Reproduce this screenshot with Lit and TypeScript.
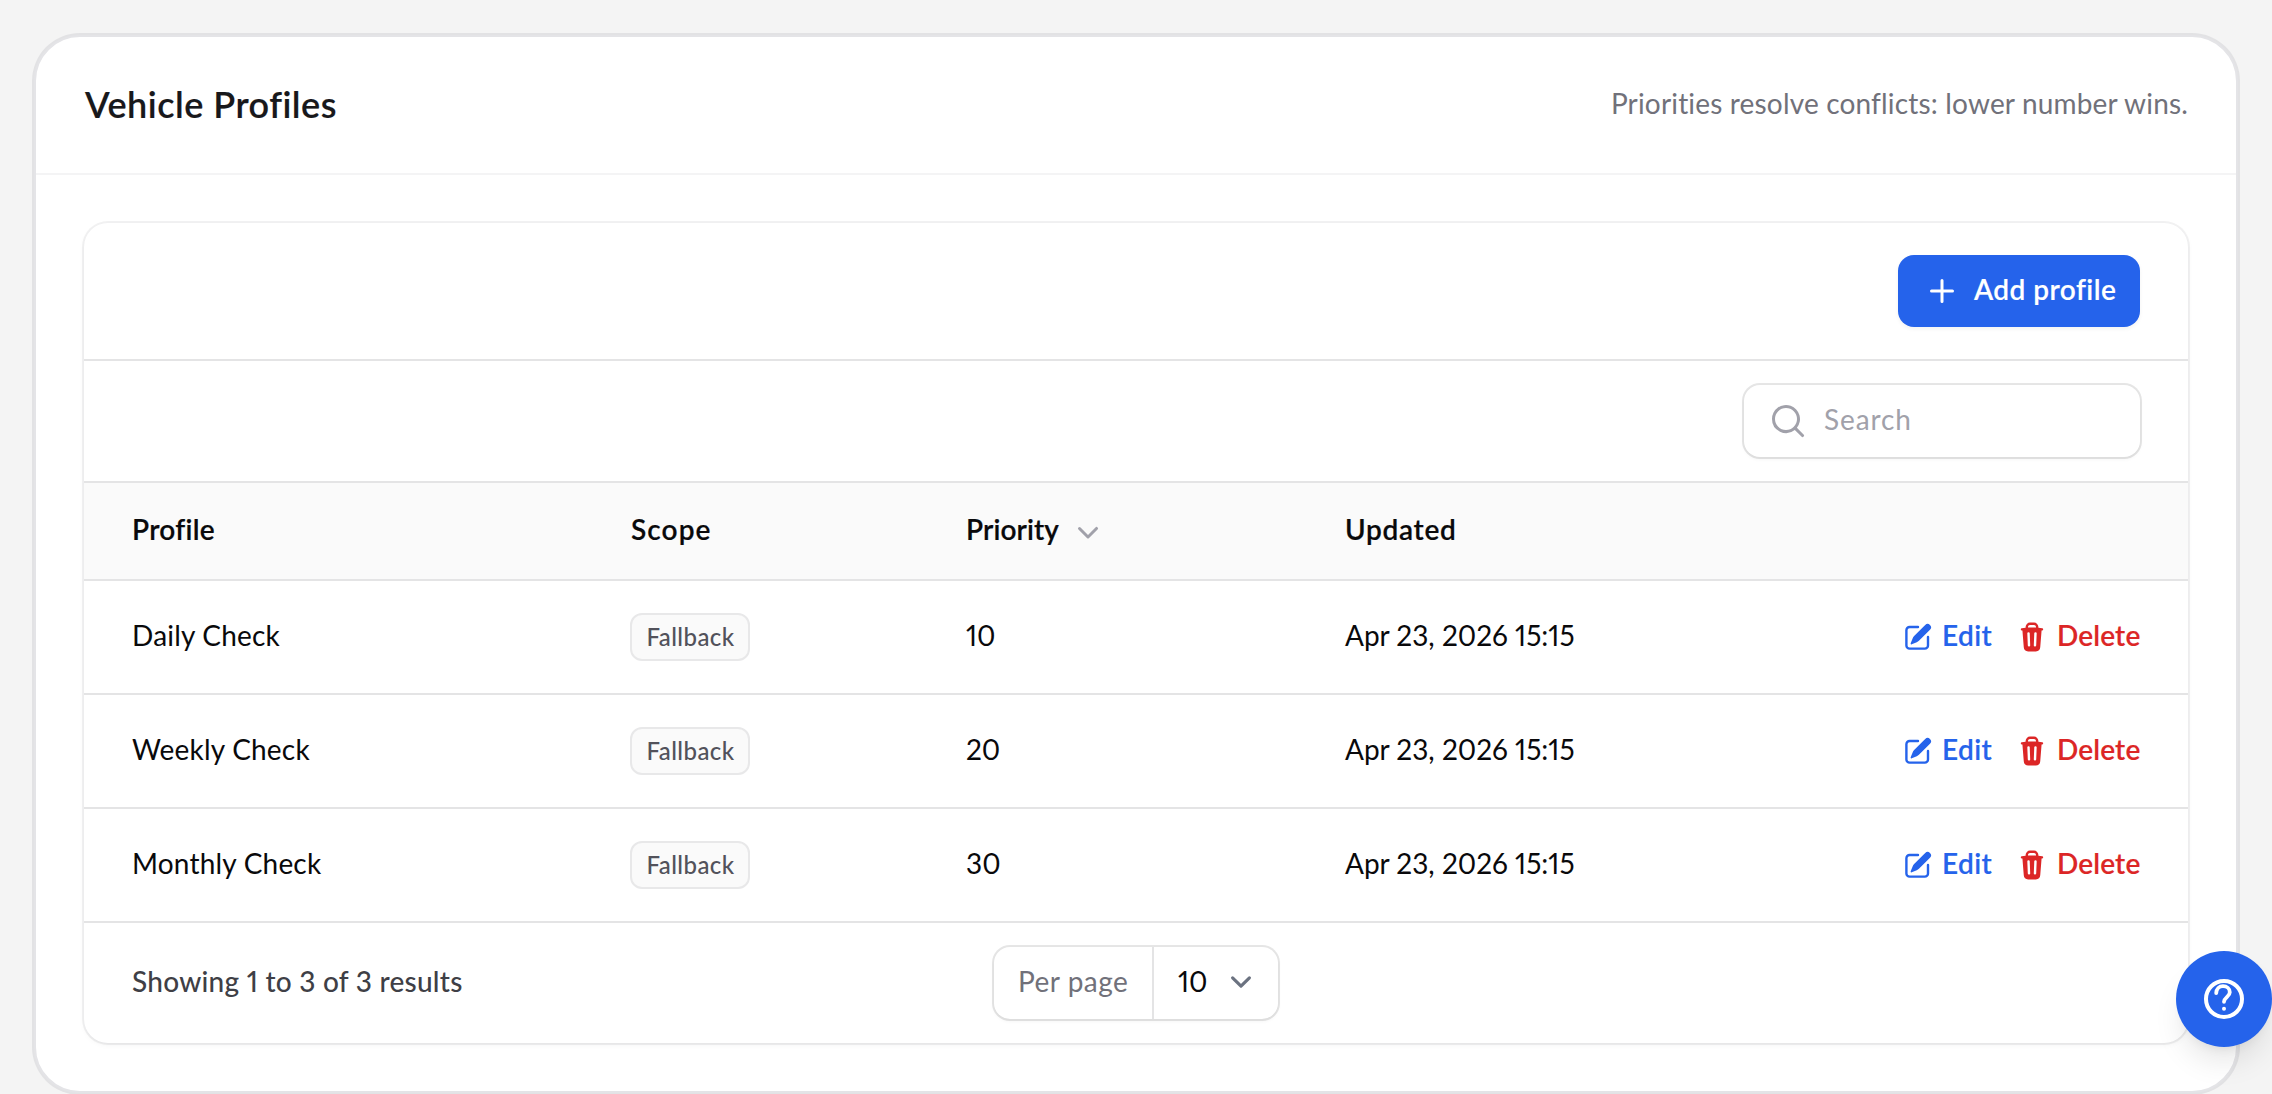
import { LitElement, html, css, svg } from "lit";

interface Profile {
  name: string;
  scope: string;
  priority: number;
  updated: string;
}

const PROFILES: Profile[] = [
  { name: "Daily Check", scope: "Fallback", priority: 10, updated: "Apr 23, 2026 15:15" },
  { name: "Weekly Check", scope: "Fallback", priority: 20, updated: "Apr 23, 2026 15:15" },
  { name: "Monthly Check", scope: "Fallback", priority: 30, updated: "Apr 23, 2026 15:15" },
];

const icons = {
  plus: svg`<path d="M10.75 4.75a.75.75 0 0 0-1.5 0v4.5h-4.5a.75.75 0 0 0 0 1.5h4.5v4.5a.75.75 0 0 0 1.5 0v-4.5h4.5a.75.75 0 0 0 0-1.5h-4.5v-4.5Z"/>`,
  search: svg`<path fill-rule="evenodd" d="M9 3.5a5.5 5.5 0 1 0 0 11 5.5 5.5 0 0 0 0-11ZM2 9a7 7 0 1 1 12.452 4.391l3.328 3.329a.75.75 0 1 1-1.06 1.06l-3.329-3.328A7 7 0 0 1 2 9Z" clip-rule="evenodd"/>`,
  chevron: svg`<path fill-rule="evenodd" d="M5.22 8.22a.75.75 0 0 1 1.06 0L10 11.94l3.72-3.72a.75.75 0 1 1 1.06 1.06l-4.25 4.25a.75.75 0 0 1-1.06 0L5.22 9.28a.75.75 0 0 1 0-1.06Z" clip-rule="evenodd"/>`,
  edit: svg`<path d="m5.433 13.917 1.262-3.155A4 4 0 0 1 7.58 9.42l6.92-6.918a2.121 2.121 0 0 1 3 3l-6.92 6.918c-.383.383-.84.685-1.343.886l-3.154 1.262a.5.5 0 0 1-.65-.65Z"/><path d="M3.5 5.75c0-.69.56-1.25 1.25-1.25H10A.75.75 0 0 0 10 3H4.75A2.75 2.75 0 0 0 2 5.75v9.5A2.75 2.75 0 0 0 4.75 18h9.5A2.75 2.75 0 0 0 17 15.25V10a.75.75 0 0 0-1.5 0v5.25c0 .69-.56 1.25-1.25 1.25h-9.5c-.69 0-1.25-.56-1.25-1.25v-9.5Z"/>`,
  trash: svg`<path fill-rule="evenodd" d="M8.75 1A2.75 2.75 0 0 0 6 3.75v.443c-.795.077-1.584.176-2.365.298a.75.75 0 1 0 .23 1.482l.149-.022.841 10.518A2.75 2.75 0 0 0 7.596 19h4.807a2.75 2.75 0 0 0 2.742-2.53l.841-10.52.149.023a.75.75 0 0 0 .23-1.482A41.03 41.03 0 0 0 14 4.193V3.75A2.75 2.75 0 0 0 11.25 1h-2.5ZM10 4c.84 0 1.673.025 2.5.075V3.75c0-.69-.56-1.25-1.25-1.25h-2.5c-.69 0-1.25.56-1.25 1.25v.325C8.327 4.025 9.16 4 10 4ZM8.58 7.72a.75.75 0 0 0-1.5.06l.3 7.5a.75.75 0 1 0 1.5-.06l-.3-7.5Zm4.34.06a.75.75 0 1 0-1.5-.06l-.3 7.5a.75.75 0 1 0 1.5.06l.3-7.5Z" clip-rule="evenodd"/>`,
};

const icon = (body: unknown, cls: string) =>
  html`<svg class="icon ${cls}" viewBox="0 0 20 20" fill="currentColor" aria-hidden="true">${body}</svg>`;

class AppRoot extends LitElement {
  static styles = css`
    :host {
      display: block;
      position: relative;
      box-sizing: border-box;
      height: 1094px;
      padding: 35px 34px 0;
      overflow: hidden;
      background: #f4f4f4;
      color: #09090b;
      font: 400 28px/40px Lato, "Open Sans", sans-serif;
      font-variant-numeric: proportional-nums;
      white-space: nowrap;
    }
    * { box-sizing: border-box; }
    svg { display: block; flex: none; }
    .icon { width: 40px; height: 40px; }
    .icon.small { width: 32px; height: 32px; }
    .t { display: block; padding-bottom: 4px; }
    .card {
      height: 1058px;
      border: 2px solid #e4e4e7;
      border-radius: 46px;
      box-shadow: 0 0 0 2px #e2e2e4;
      background: #fff;
    }
    .card-head {
      display: flex;
      justify-content: space-between;
      align-items: center;
      height: 138px;
      padding: 0 48px;
      border-bottom: 2px solid #f4f4f5;
    }
    h1 {
      margin: 0;
      padding: 0 0 2px 1px;
      font-size: 36px;
      font-weight: 600;
      color: #18181b;
      letter-spacing: 0.5px;
      -webkit-text-stroke: 0.15px;
    }
    .hint { color: #71717a; letter-spacing: 0.17px; }
    .panel {
      height: 820px;
      margin: 48px 48px 0;
      border-radius: 24px;
      box-shadow: 0 0 0 2px rgba(9, 9, 11, 0.05), 0 2px 6px rgba(0, 0, 0, 0.04), 0 2px 4px -2px rgba(0, 0, 0, 0.05);
      background: #fff;
    }
    .toolbar, .filters {
      display: flex;
      justify-content: flex-end;
      align-items: center;
      padding: 0 48px;
      border-bottom: 2px solid #e4e4e5;
    }
    .toolbar { height: 138px; }
    .filters { height: 122px; }
    button { border: 0; margin: 0; padding: 0; background: none; font: inherit; color: inherit; }
    .add {
      display: flex;
      align-items: center;
      gap: 12px;
      width: 242px;
      height: 72px;
      padding: 0 24px;
      border-radius: 16px;
      background: #2563eb;
      box-shadow: 0 2px 4px rgba(0, 0, 0, 0.05);
      color: #fff;
      font-weight: 600;
      letter-spacing: 0.45px;
      -webkit-text-stroke: 0.15px;
    }
    .search {
      display: flex;
      align-items: center;
      gap: 16px;
      width: 396px;
      height: 72px;
      padding-left: 24px;
      border-radius: 16px;
      box-shadow: 0 0 0 2px rgba(9, 9, 11, 0.1), 0 2px 4px rgba(0, 0, 0, 0.05);
      color: #a1a1aa;
    }
    .search .t { letter-spacing: 0.9px; }
    .row {
      display: grid;
      grid-template-columns: 522px 336px 378px 1fr 300px;
      align-items: center;
      height: 114px;
      border-bottom: 2px solid #e4e4e5;
    }
    .row > * { padding-left: 24px; }
    .row > :first-child { padding-left: 48px; }
    .row.head { height: 98px; background: #fafafa; font-weight: 600; -webkit-text-stroke: 0.2px; }
    .sort { display: flex; align-items: center; gap: 9px; color: #a1a1aa; }
    .sort .t { color: #09090b; letter-spacing: 0.1px; }
    .h-profile { letter-spacing: 0.3px; }
    .h-scope { letter-spacing: 1.1px; }
    .h-updated { letter-spacing: 0.7px; }
    .name { letter-spacing: 0.2px; }
    .row > .h-scope, .row > .h-updated, .row > .when { padding-left: 25px; }
    .badge {
      display: inline-flex;
      align-items: center;
      justify-content: center;
      width: 120px;
      height: 48px;
      padding: 0 0 1px 1px;
      border: 2px solid #e8e8e9;
      border-radius: 12px;
      background: #fafafa;
      color: #52525b;
      font-size: 24px;
      font-weight: 500;
      letter-spacing: 0.42px;
    }
    .row .actions {
      display: flex;
      justify-content: flex-end;
      gap: 24px;
      padding: 0 48px 0 0;
      font-weight: 600;
      -webkit-text-stroke: 0.15px;
    }
    .action { display: flex; align-items: center; gap: 8px; }
    .edit { width: 90px; color: #2563eb; letter-spacing: 0.4px; }
    .delete { width: 124px; gap: 9px; color: #dc2626; letter-spacing: 0.15px; }
    .foot { display: grid; grid-template-columns: 1fr auto 1fr; align-items: center; height: 120px; padding: 0 48px; }
    .count { font-weight: 500; color: #3f3f46; letter-spacing: 0.25px; }
    .pager {
      display: flex;
      width: 284px;
      height: 72px;
      border-radius: 16px;
      box-shadow: 0 0 0 2px rgba(9, 9, 11, 0.1), 0 2px 4px rgba(0, 0, 0, 0.05);
    }
    .pager-label {
      display: flex;
      align-items: center;
      width: 160px;
      padding-left: 24px;
      border-right: 2px solid #e4e4e5;
      color: #71717a;
      letter-spacing: 0.5px;
    }
    .pager-value { display: flex; align-items: center; justify-content: space-between; flex: 1; padding: 0 16px 0 24px; }
    .caret { width: 42px; height: 42px; margin-top: -2px; }
    .help {
      position: absolute;
      top: 951px;
      right: 0;
      display: flex;
      align-items: center;
      justify-content: center;
      width: 96px;
      height: 96px;
      border-radius: 50%;
      background: #2563eb;
      box-shadow: 0 20px 30px -6px rgba(0, 0, 0, 0.1), 0 8px 12px -8px rgba(0, 0, 0, 0.1);
      color: #fff;
    }
  `;

  private row(p: Profile) {
    return html`
      <div class="row">
        <span class="t name">${p.name}</span>
        <div><span class="badge">${p.scope}</span></div>
        <span class="t">${p.priority}</span>
        <span class="t when">${p.updated}</span>
        <div class="actions">
          <button class="action edit">${icon(icons.edit, "small")}<span class="t">Edit</span></button>
          <button class="action delete">${icon(icons.trash, "small")}<span class="t">Delete</span></button>
        </div>
      </div>
    `;
  }

  render() {
    return html`
      <section class="card">
        <header class="card-head">
          <h1>Vehicle Profiles</h1>
          <span class="t hint">Priorities resolve conflicts: lower number wins.</span>
        </header>
        <div class="panel">
          <div class="toolbar">
            <button class="add">${icon(icons.plus, "")}<span class="t">Add profile</span></button>
          </div>
          <div class="filters">
            <div class="search">${icon(icons.search, "")}<span class="t">Search</span></div>
          </div>
          <div class="row head">
            <span class="t h-profile">Profile</span>
            <span class="t h-scope">Scope</span>
            <div class="sort"><span class="t">Priority</span>${icon(icons.chevron, "")}</div>
            <span class="t h-updated">Updated</span>
            <span></span>
          </div>
          ${PROFILES.map((p) => this.row(p))}
          <div class="foot">
            <span class="t count">Showing 1 to 3 of 3 results</span>
            <div class="pager">
              <div class="pager-label"><span class="t">Per page</span></div>
              <div class="pager-value">
                <span class="t">10</span>
                <svg class="caret" viewBox="0 0 20 20" fill="none" stroke="#6b7280" stroke-width="1.5" stroke-linecap="round" stroke-linejoin="round"><path d="m6 8 4 4 4-4"/></svg>
              </div>
            </div>
          </div>
        </div>
      </section>
      <button class="help" aria-label="Help">
        <svg width="48" height="48" viewBox="0 0 24 24" fill="none" stroke="currentColor" stroke-linecap="round">
          <circle cx="12" cy="12" r="9" stroke-width="2"/>
          <path stroke-width="1.9" d="M8.1 9.1C8.2 7 9.6 5.6 11.5 5.6c1.9 0 3.4 1.2 3.4 3 0 2.3-2.9 2.6-2.9 4.8"/>
          <circle cx="12" cy="16.9" r="1" fill="currentColor" stroke="none"/>
        </svg>
      </button>
    `;
  }
}
customElements.define("app-root", AppRoot);
